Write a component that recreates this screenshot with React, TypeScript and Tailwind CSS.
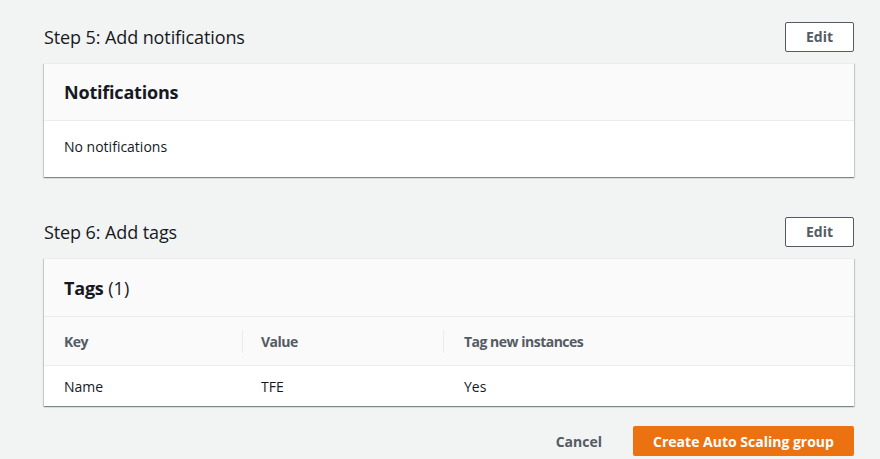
import React from "react";

const font = { fontFamily: '"Open Sans", "Noto Sans", Arial, sans-serif' };

function EditButton() {
  return (
    <button className="h-[30px] w-[69px] rounded-[2px] border border-[#545b64] bg-white text-[14px] font-bold text-[#545b64] leading-none">
      Edit
    </button>
  );
}

function Card({ children }: { children: React.ReactNode }) {
  return (
    <div className="bg-white border-t border-[#eaeded] shadow-[0_1px_1px_0_rgba(0,28,36,0.3),1px_1px_1px_0_rgba(0,28,36,0.15),-1px_1px_1px_0_rgba(0,28,36,0.15)]">
      {children}
    </div>
  );
}

export default function App() {
  return (
    <div className="min-h-[459px] w-[880px] bg-[#f2f3f3] text-[#16191f]" style={font}>
      <div className="ml-[44px] w-[810px] pt-[22px]">
        <div className="flex items-center justify-between">
          <h2 className="text-[18px] leading-[22px] tracking-[-0.1px] text-[#16191f]">Step 5: Add notifications</h2>
          <EditButton />
        </div>
        <div className="mt-[11px]">
          <Card>
            <div className="flex h-[57px] items-center border-b border-[#eaeded] bg-[#fafafa] px-[20px]">
              <span className="text-[18px] font-bold leading-[22px] tracking-[-0.2px]">Notifications</span>
            </div>
            <div className="flex h-[56px] items-center px-[20px] pb-[5px] text-[14px]">No notifications</div>
          </Card>
        </div>

        <div className="mt-[40px] flex items-center justify-between">
          <h2 className="text-[18px] leading-[22px] tracking-[-0.1px] text-[#16191f]">Step 6: Add tags</h2>
          <EditButton />
        </div>
        <div className="mt-[11px]">
          <Card>
            <div className="flex h-[58px] items-center border-b border-[#eaeded] bg-[#fafafa] px-[20px]">
              <span className="text-[18px] leading-[22px]">
                <span className="font-bold tracking-[-0.2px]">Tags</span> (1)
              </span>
            </div>
            <div className="grid h-[49px] grid-cols-[198px_201px_1fr] items-center border-b border-[#eaeded] bg-[#fafafa] text-[14px] font-bold tracking-[-0.5px] text-[#545b64]">
              <div className="pl-[20px]">Key</div>
              <div className="flex h-[23px] items-center border-l border-[#eaeded] pl-[18px]">Value</div>
              <div className="flex h-[23px] items-center border-l border-[#eaeded] pl-[20px]">Tag new instances</div>
            </div>
            <div className="grid h-[40px] grid-cols-[198px_201px_1fr] items-center text-[14px]">
              <div className="pl-[20px]">Name</div>
              <div className="pl-[19px]">TFE</div>
              <div className="pl-[21px]">Yes</div>
            </div>
          </Card>
        </div>

        <div className="mt-[20px] flex items-center justify-end gap-[31px]">
          <button className="text-[14px] font-bold text-[#545b64]">Cancel</button>
          <button className="h-[30px] w-[221px] rounded-[2px] bg-[#ec7211] text-[14px] font-bold text-white">
            Create Auto Scaling group
          </button>
        </div>
      </div>
    </div>
  );
}
